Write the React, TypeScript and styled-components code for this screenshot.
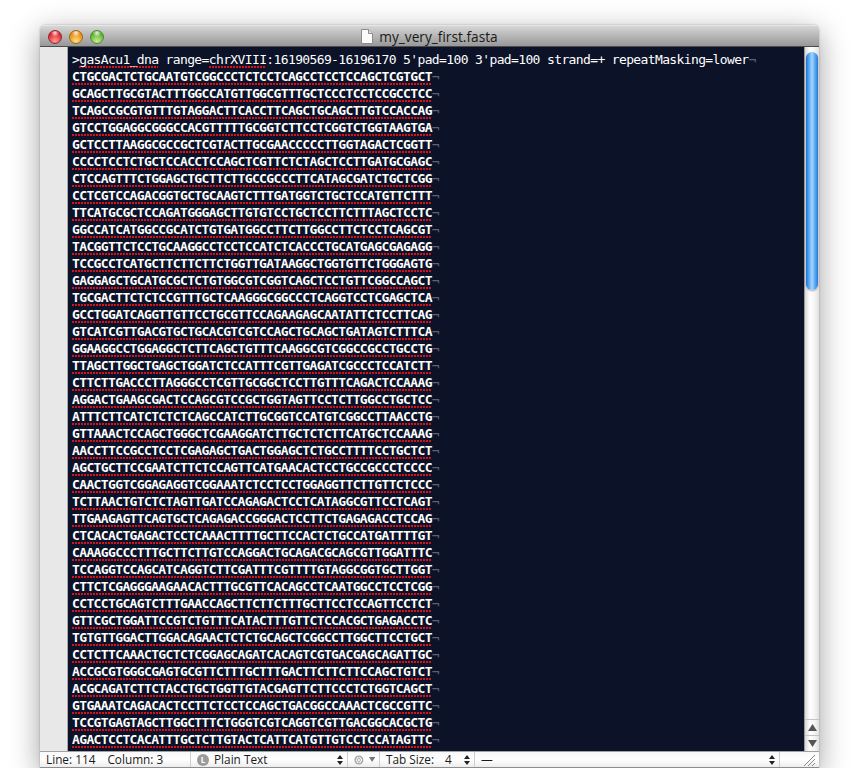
import { createGlobalStyle, styled } from "styled-components";

const SEQUENCES = [
  "CTGCGACTCTGCAATGTCGGCCCTCTCCTCAGCCTCCTCCAGCTCGTGCT",
  "GCAGCTTGCGTACTTTGGCCATGTTGGCGTTTGCTCCCTCCTCCGCCTCC",
  "TCAGCCGCGTGTTTGTAGGACTTCACCTTCAGCTGCAGCTTGTCCACCAG",
  "GTCCTGGAGGCGGGCCACGTTTTTGCGGTCTTCCTCGGTCTGGTAAGTGA",
  "GCTCCTTAAGGCGCCGCTCGTACTTGCGAACCCCCTTGGTAGACTCGGTT",
  "CCCCTCCTCTGCTCCACCTCCAGCTCGTTCTCTAGCTCCTTGATGCGAGC",
  "CTCCAGTTTCTGGAGCTGCTTCTTGCCGCCCTTCATAGCGATCTGCTCGG",
  "CCTCGTCCAGACGGTGCTGCAAGTCTTTGATGGTCTGCTCCATGTTCTTT",
  "TTCATGCGCTCCAGATGGGAGCTTGTGTCCTGCTCCTTCTTTAGCTCCTC",
  "GGCCATCATGGCCGCATCTGTGATGGCCTTCTTGGCCTTCTCCTCAGCGT",
  "TACGGTTCTCCTGCAAGGCCTCCTCCATCTCACCCTGCATGAGCGAGAGG",
  "TCCGCCTCATGCTTCTTCTTCTGGTTGATAAGGCTGGTGTTCTGGGAGTG",
  "GAGGAGCTGCATGCGCTCTGTGGCGTCGGTCAGCTCCTGTTCGGCCAGCT",
  "TGCGACTTCTCTCCGTTTGCTCAAGGGCGGCCCTCAGGTCCTCGAGCTCA",
  "GCCTGGATCAGGTTGTTCCTGCGTTCCAGAAGAGCAATATTCTCCTTCAG",
  "GTCATCGTTGACGTGCTGCACGTCGTCCAGCTGCAGCTGATAGTCTTTCA",
  "GGAAGGCCTGGAGGCTCTTCAGCTGTTTCAAGGCGTCGGCCGCCTGCCTG",
  "TTAGCTTGGCTGAGCTGGATCTCCATTTCGTTGAGATCGCCCTCCATCTT",
  "CTTCTTGACCCTTAGGGCCTCGTTGCGGCTCCTTGTTTCAGACTCCAAAG",
  "AGGACTGAAGCGACTCCAGCGTCCGCTGGTAGTTCCTCTTGGCCTGCTCC",
  "ATTTCTTCATCTCTCTCAGCCATCTTGCGGTCCATGTCGGCCTTAACCTG",
  "GTTAAACTCCAGCTGGGCTCGAAGGATCTTGCTCTCTTCATGCTCCAAAG",
  "AACCTTCCGCCTCCTCGAGAGCTGACTGGAGCTCTGCCTTTTCCTGCTCT",
  "AGCTGCTTCCGAATCTTCTCCAGTTCATGAACACTCCTGCCGCCCTCCCC",
  "CAACTGGTCGGAGAGGTCGGAAATCTCCTCCTGGAGGTTCTTGTTCTCCC",
  "TCTTAACTGTCTCTAGTTGATCCAGAGACTCCTCATAGGCGTTCCTCAGT",
  "TTGAAGAGTTCAGTGCTCAGAGACCGGGACTCCTTCTGAGAGACCTCCAG",
  "CTCACACTGAGACTCCTCAAACTTTTGCTTCCACTCTGCCATGATTTTGT",
  "CAAAGGCCCTTTGCTTCTTGTCCAGGACTGCAGACGCAGCGTTGGATTTC",
  "TCCAGGTCCAGCATCAGGTCTTCGATTTCGTTTTGTAGGCGGTGCTTGGT",
  "CTTCTCGAGGGAAGAACACTTTGCGTTCACAGCCTCAATGGCCTCCTCGG",
  "CCTCCTGCAGTCTTTGAACCAGCTTCTTCTTTGCTTCCTCCAGTTCCTCT",
  "GTTCGCTGGATTCCGTCTGTTTCATACTTTGTTCTCCACGCTGAGACCTC",
  "TGTGTTGGACTTGGACAGAACTCTCTGCAGCTCGGCCTTGGCTTCCTGCT",
  "CCTCTTCAAACTGCTCTCGGAGCAGATCACAGTCGTGACGAGCAGATTGC",
  "ACCGCGTGGGCGAGTGCGTTCTTTGCTTTGACTTCTTCTTCCAGCTGTCT",
  "ACGCAGATCTTCTACCTGCTGGTTGTACGAGTTCTTCCCTCTGGTCAGCT",
  "GTGAAATCAGACACTCCTTCTCCTCCAGCTGACGGCCAAACTCGCCGTTC",
  "TCCGTGAGTAGCTTGGCTTTCTGGGTCGTCAGGTCGTTGACGGCACGCTG",
  "AGACTCCTCACATTTGCTCTTGTACTCATTCATGTTGTCCTCCATAGTTC",
  "CCTCCTTGAGCTCCTTCAGCTGGTTCTCCAGGGTCTTGATCTCCTGCTCC",
];

const GlobalStyle = createGlobalStyle`
  html, body {
    margin: 0;
    height: 768px;
    overflow: hidden;
    background: #fff;
  }
`;

const Page = styled.div`
  padding: 25px 0 0 40px;
`;

const Window = styled.div`
  width: 779px;
  height: 743px;
  display: flex;
  flex-direction: column;
  border-radius: 5px 5px 0 0;
  overflow: hidden;
  box-shadow: 0 8px 30px rgba(0, 0, 0, 0.38), 0 0 2px rgba(0, 0, 0, 0.3);
`;

const TitleBar = styled.header`
  position: relative;
  flex: none;
  box-sizing: border-box;
  height: 22px;
  display: flex;
  align-items: center;
  justify-content: center;
  gap: 6px;
  background: linear-gradient(#d6d6d6, #bcbcbc 40%, #989898);
  border-top: 1px solid #e6e6e6;
  border-bottom: 1px solid #4c4c4c;
  font: 13.7px "Open Sans", "Liberation Sans", sans-serif;
  color: #1a1a1a;
`;

const Lights = styled.div`
  position: absolute;
  left: 8px;
  top: 4px;
  display: flex;
  gap: 7px;
`;

const Light = styled.span<{ $base: string; $glow: string; $dark: string }>`
  width: 14px;
  height: 14px;
  border-radius: 50%;
  box-sizing: border-box;
  border: 1px solid ${(p) => p.$dark};
  background:
    radial-gradient(circle at 50% 15%, rgba(255, 255, 255, 0.85), transparent 35%),
    radial-gradient(circle at 50% 85%, ${(p) => p.$glow}, ${(p) => p.$base} 70%);
`;

const Body = styled.div`
  flex: 1;
  min-height: 0;
  display: flex;
`;

const Gutter = styled.div`
  flex: none;
  width: 27px;
  background: #e8e8e8;
  border-right: 1px solid #a9a9a9;
`;

const Editor = styled.main`
  flex: 1;
  min-width: 0;
  overflow: hidden;
  box-sizing: border-box;
  padding: 4px 0 0 4px;
  background: #0c1329;
  color: #fff;
  font: 13px/17px "DejaVu Sans Mono", monospace;
  letter-spacing: -0.63px;
`;

const Row = styled.div`
  height: 17px;
  white-space: pre;
`;

const Sequence = styled.span`
  font-weight: 700;
`;

const Misspelled = styled.span`
  display: inline-block;
  height: 17px;
  background: linear-gradient(90deg, #d8101c 2px, transparent 2px) left 15px / 3px 2px repeat-x;
`;

const Pilcrow = styled.span`
  color: #5c6272;
  font-weight: 400;
`;

const Scrollbar = styled.aside`
  flex: none;
  width: 15px;
  display: flex;
  flex-direction: column;
  box-sizing: border-box;
  border-left: 1px solid #9a9a9a;
  background: linear-gradient(90deg, #d8d8d8, #fff 35%, #f4f4f4 70%, #e0e0e0);
`;

const Track = styled.div`
  flex: 1;
  padding: 5px 1px 0;
`;

const Thumb = styled.div`
  height: 238px;
  border-radius: 7px;
  box-shadow: 0 1px 2px rgba(0, 0, 0, 0.35);
  background: linear-gradient(90deg, #1c6fd8, #57a8f3 25%, #a6d6fb 50%, #5aaaf3 75%, #2377dd);
`;

const ArrowButton = styled.div`
  height: 15px;
  display: flex;
  align-items: center;
  justify-content: center;
  border-top: 1px solid #c4c4c4;
`;

const StatusBar = styled.footer`
  flex: none;
  height: 15px;
  display: flex;
  border-top: 1px solid #a2a2a2;
  border-bottom: 1px solid #8c8c8c;
  background: linear-gradient(#f8f8f8, #ffffff 50%, #ececec);
  font: 11.8px/15px "Open Sans", "Liberation Sans", sans-serif;
  color: #1a1a1a;
`;

const StatusCell = styled.div<{ $width: number; $flat?: boolean }>`
  flex: none;
  width: ${(p) => p.$width}px;
  box-sizing: border-box;
  display: flex;
  align-items: center;
  padding: 0 4px 0 6px;
  gap: 5px;
  border-right: ${(p) => (p.$flat ? "none" : "1px solid #cfcfcf")};
  white-space: pre;
`;

const CaretPosition = styled.div`
  display: flex;
  gap: 12px;
`;

const TabLabel = styled.div`
  display: flex;
  gap: 11px;
  color: #1a1a1a;
`;

const Spacer = styled.span`
  flex: 1;
`;

const SyntaxBadge = styled.span`
  width: 12px;
  height: 12px;
  border-radius: 50%;
  background: #9b9b9b;
  color: #fff;
  font-size: 8px;
  line-height: 12px;
  font-weight: 700;
  text-align: center;
`;

const Line = ({ text }: { text: string }) => (
  <Row>
    <Sequence>
      <Misspelled>{text}</Misspelled>
    </Sequence>
    <Pilcrow>¬</Pilcrow>
  </Row>
);

const Stepper = () => (
  <svg width="6" height="10" viewBox="0 0 6 10">
    <path d="M3 0L6 4H0zM3 10L0 6h6z" fill="#222" />
  </svg>
);

const FileIcon = () => (
  <svg width="12" height="15" viewBox="0 0 12 15">
    <path d="M.5.5h7l4 4v10H.5z" fill="#fbfbfb" stroke="#8c8c8c" />
    <path d="M7.5.5v4h4" fill="#ddd" stroke="#8c8c8c" />
  </svg>
);

const GearIcon = () => (
  <svg width="14" height="14" viewBox="0 0 14 14">
    <circle cx="7" cy="7" r="6.5" fill="#a8a8a8" />
    <circle cx="7" cy="7" r="3.6" fill="none" stroke="#fff" strokeWidth="2" strokeDasharray="1.6 0.7" />
    <circle cx="7" cy="7" r="1.6" fill="#fff" />
  </svg>
);

const Triangle = ({ down, color = "#555" }: { down?: boolean; color?: string }) => (
  <svg width="9" height="7" viewBox="0 0 9 7">
    <path d={down ? "M0 0h9L4.5 7z" : "M4.5 0L9 7H0z"} fill={color} />
  </svg>
);

const Grip = () => (
  <svg width="12" height="12" viewBox="0 0 12 12">
    <path d="M1 12L12 1M5 12l7-7M9 12l3-3" stroke="#8a8a8a" fill="none" />
  </svg>
);

export default function App() {
  return (
    <Page>
      <GlobalStyle />
      <Window>
        <TitleBar>
          <Lights>
            <Light $base="#e0222c" $glow="#ff9a9a" $dark="#8c2a2a" />
            <Light $base="#e88a10" $glow="#ffe080" $dark="#9a6a18" />
            <Light $base="#58b030" $glow="#c8f090" $dark="#4c8a30" />
          </Lights>
          <FileIcon />
          my_very_first.fasta
        </TitleBar>
        <Body>
          <Gutter />
          <Editor>
            <Row>
              {">"}
              <Misspelled>gasAcu1_dna</Misspelled>
              {" range="}
              <Misspelled>chrXVIII</Misspelled>
              {":16190569-16196170 5'pad=100 3'pad=100 strand=+ repeatMasking=lower"}
              <Pilcrow>¬</Pilcrow>
            </Row>
            {SEQUENCES.map((text, i) => (
              <Line key={i} text={text} />
            ))}
          </Editor>
          <Scrollbar>
            <Track>
              <Thumb />
            </Track>
            <ArrowButton>
              <Triangle />
            </ArrowButton>
            <ArrowButton>
              <Triangle down />
            </ArrowButton>
          </Scrollbar>
        </Body>
        <StatusBar>
          <StatusCell $width={151}>
            <CaretPosition>
              <span>Line: 114</span>
              <span>Column: 3</span>
            </CaretPosition>
          </StatusCell>
          <StatusCell $width={157}>
            <SyntaxBadge>L</SyntaxBadge>
            Plain Text
            <Spacer />
            <Stepper />
          </StatusCell>
          <StatusCell $width={32}>
            <GearIcon />
            <Triangle down color="#777" />
          </StatusCell>
          <StatusCell $width={95}>
            <TabLabel>
              <span>Tab Size:</span>
              <span>4</span>
            </TabLabel>
            <Spacer />
            <Stepper />
          </StatusCell>
          <StatusCell $width={305}>
            —
            <Spacer />
            <Stepper />
          </StatusCell>
          <StatusCell $width={39} $flat>
            <Spacer />
            <Grip />
          </StatusCell>
        </StatusBar>
      </Window>
    </Page>
  );
}
